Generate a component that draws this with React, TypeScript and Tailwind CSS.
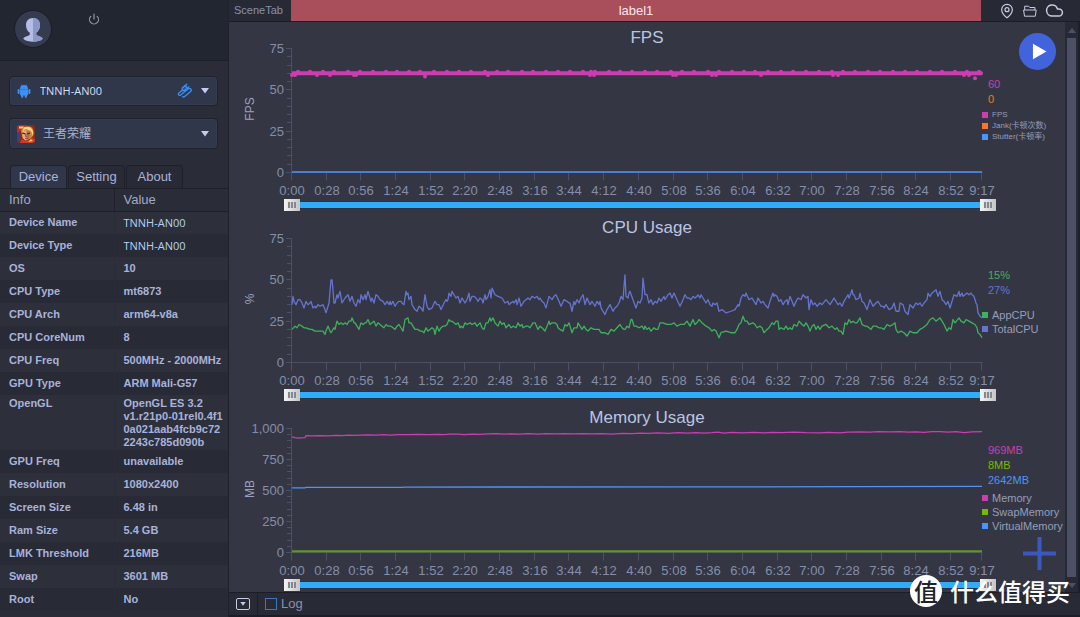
import { useEffect, useRef, useState } from "react";
import { Cloud, MapPin, Power } from "lucide-react";

type Point = [number, number];

interface Series {
	name: string;
	color: string;
	reading?: string;
	points?: Point[];
	strokeWidth?: number;
	dots?: Point[];
}

interface ChartProps {
	title: string;
	unit: string;
	max: number;
	step: number;
	minor: number;
	series: Series[];
	asideClass: string;
	legendClass: string;
}

const DURATION = 557;
const SAMPLE_SPAN = 690;

const DEVICE_INFO: [string, string][] = [
	["Device Name", "TNNH-AN00"],
	["Device Type", "TNNH-AN00"],
	["OS", "10"],
	["CPU Type", "mt6873"],
	["CPU Arch", "arm64-v8a"],
	["CPU CoreNum", "8"],
	["CPU Freq", "500MHz - 2000MHz"],
	["GPU Type", "ARM Mali-G57"],
	["OpenGL", "OpenGL ES 3.2\nv1.r21p0-01rel0.4f1\n0a021aab4fcb9c72\n2243c785d090b"],
	["GPU Freq", "unavailable"],
	["Resolution", "1080x2400"],
	["Screen Size", "6.48 in"],
	["Ram Size", "5.4 GB"],
	["LMK Threshold", "216MB"],
	["Swap", "3601 MB"],
	["Root", "No"],
];

function parse(data: string): Point[] {
	return data
		.trim()
		.split(/\s+/)
		.map((pair) => pair.split(",").map(Number) as Point);
}

const TOTAL_CPU = parse(`
0,35 1,40 2,37 4,35 6,38 8,38 10,36 12,33 14,37 16,35 18,36 19,37 21,33 23,34 24,33 26,35 28,34 31,35 33,32 34,30 37,36 38,43 39,50 40,50 41,44 42,36 43,36
45,41 46,39 48,43 50,36 53,39 56,41 58,37 60,40 62,36 64,34 66,38 68,36 69,41 71,38 73,41 74,38 76,43 79,37 80,39 82,36 84,41 86,40 88,38 91,37 93,35 95,37
97,35 98,37 99,35 101,37 103,34 105,36 107,37 109,37 110,36 112,35 114,43 115,41 116,42 117,38 119,40 120,35 123,32 125,31 127,34 129,33 131,31 132,36
133,41 135,34 137,32 140,33 143,37 145,35 147,35 149,32 152,36 154,38 155,37 156,38 157,42 159,40 160,43 162,41 164,39 166,40 168,36 170,39 171,38 173,36
175,38 177,42 178,37 180,40 182,40 184,39 186,37 188,39 190,38 191,36 193,41 194,38 196,40 198,44 199,39 200,45 203,41 206,40 210,39 212,37 213,36
216,37 217,35 219,36 221,37 222,36 224,38 225,35 227,39 229,34 232,37 234,38 236,39 238,38 240,40 243,39 245,40 247,38 248,39 250,37 252,36 254,33 257,40
260,38 262,40 264,41 267,37 269,34 272,38 275,37 277,36 278,36 280,31 282,37 283,35 285,38 287,36 289,39 291,41 293,35 295,39 298,35 300,37 301,36 303,34
305,37 307,35 308,37 309,33 310,32 313,29 315,32 318,35 321,31 323,33 325,34 327,36 329,40 331,38 332,46 333,53 334,40 336,39 337,42 338,43 341,38 344,33
346,37 348,36 350,39 351,51 352,46 353,41 355,41 356,38 357,36 359,38 361,35 363,37 365,36 367,39 369,37 370,38 372,40 373,38 376,41 378,42 380,39 382,42
385,38 388,34 391,38 393,41 395,39 397,39 399,38 401,40 403,39 405,40 406,41 408,39 409,41 411,39 414,36 416,38 418,35 420,34 421,36 423,35 425,36 427,31
430,32 434,30 439,31 443,32 446,35 447,34 449,39 451,41 453,40 454,42 457,38 460,39 462,37 464,35 466,39 467,38 469,36 471,37 473,35 476,33 478,37 481,42
482,40 483,41 485,40 487,37 489,38 491,35 493,37 495,38 496,35 498,40 500,37 502,34 504,37 506,39 509,38 511,41 514,39 516,40 517,32 519,38 521,35 523,36
525,34 528,36 530,35 534,38 538,35 540,37 542,39 544,37 546,35 548,36 550,34 552,37 554,39 556,41 557,39 559,42 560,44 561,41 562,41 564,38 567,39 568,42
570,37 572,36 575,32 578,38 581,34 584,36 586,37 589,34 591,34 592,33 594,35 595,34 597,32 600,33 602,36 604,31 607,31 608,36 611,35 613,31 616,29 618,35
621,33 624,36 626,35 628,36 630,34 632,36 635,38 636,42 638,40 640,42 642,43 644,44 646,40 648,43 650,38 652,37 654,35 656,37 658,33 661,39 662,41 665,40
667,43 668,40 670,42 671,40 673,41 675,42 677,41 679,42 680,41 682,40 684,36 685,35 686,30 688,28 690,27
`);

const APP_CPU = parse(`
0,20 3,22 5,21 7,23 10,22 12,21 14,21 18,20 20,20 23,19 27,19 31,19 33,17 34,19 36,22 38,19 39,18 42,21 43,20 45,25 47,23 49,24 51,23 53,24 55,23 57,25
59,25 60,27 62,24 63,24 65,22 67,20 69,24 71,23 73,24 74,24 76,26 78,23 80,24 82,25 84,22 86,24 88,23 90,22 92,21 94,23 96,22 99,22 101,21 103,20 105,22
107,23 109,21 111,19 113,26 116,27 117,24 119,24 121,22 123,20 126,20 128,19 130,19 132,18 134,21 136,19 138,20 140,21 142,20 143,17 145,22 147,19 149,21
151,22 153,22 155,23 157,26 158,25 160,25 162,24 164,23 166,24 168,21 169,22 171,21 173,24 175,23 178,24 180,23 183,24 185,22 188,24 190,21 192,20 194,24
196,24 198,27 199,25 201,27 203,24 206,22 208,25 210,23 212,24 214,21 217,23 219,21 221,22 224,21 226,24 228,22 230,23 231,21 234,22 236,22 238,21 241,24
243,24 246,20 248,22 250,21 253,19 255,22 257,25 258,23 260,24 263,24 265,23 266,21 268,20 271,19 273,23 275,22 277,24 279,20 280,18 282,21 285,21 286,24
288,22 290,20 292,22 294,20 296,19 299,21 302,20 305,20 307,20 309,18 313,18 316,17 319,20 322,19 325,21 328,23 330,21 332,20 333,20 335,22 337,21
339,26 340,26 342,22 344,22 347,21 350,22 352,20 353,22 355,20 357,21 359,19 362,21 364,20 366,20 368,24 371,24 375,23 379,23 382,24 385,22 388,23 392,23
395,25 398,22 401,26 403,23 405,24 407,26 410,24 412,23 414,22 417,21 420,19 422,20 424,19 427,15 429,18 434,19 439,18 443,18 445,20 447,23 449,24 451,28
453,25 455,25 457,23 461,24 463,23 465,21 468,22 470,21 472,18 475,20 477,21 480,24 482,23 484,25 486,25 487,20 489,21 492,20 494,22 496,20 498,21 500,20
502,23 505,22 507,25 510,23 512,22 514,24 516,22 518,19 520,22 522,23 524,20 526,22 528,20 530,22 534,23 537,21 540,22 543,20 545,21 547,19 549,19 551,17
553,24 555,23 557,26 559,24 561,25 563,24 565,24 568,27 570,23 573,22 575,22 577,21 579,20 581,22 584,22 587,21 589,21 592,20 595,23 598,22 601,23 603,24
604,20 606,18 609,19 612,18 615,16 618,19 621,18 625,18 628,20 631,21 635,23 638,26 641,27 644,25 648,27 650,25 652,23 655,19 657,21 659,20 661,26 663,24
667,27 669,25 672,24 674,26 677,25 680,24 683,23 685,21 686,18 688,17 690,15
`);

const MEMORY = parse(`
0,932 3,926 6,922 9,924 13,926 14,942 20,940 28,942 36,940 44,945 50,942 56,947 62,944 68,946 76,948 84,946 92,950 98,946 106,950 116,950 126,952 136,951 146,953
152,950 158,954 166,954 172,951 180,955 188,952 196,956 204,958 212,954 220,957 228,955 236,958 246,954 254,958 264,956 272,959 282,956 290,958 300,956
310,958 320,955 330,960 340,958 348,962 356,960 366,964 376,960 386,966 396,963 404,967 412,963 420,966 426,971 432,963 440,968 450,965 462,968 472,964
480,969 490,966 502,970 514,966 528,965 536,968 548,964 556,970 568,972 578,970 586,975 598,972 608,974 616,971 624,973 632,968 640,974 648,975 656,970
664,974 672,967 680,973 690,975
`);

const FPS_DOTS: Point[] = [
	...[
		6, 18, 31, 42, 56, 68, 81, 94, 105, 117, 128, 142, 155, 167, 179, 193, 205, 216, 230, 241, 254, 266, 278,
		291, 299, 303, 317, 328, 340, 353, 365, 379, 390, 402, 416, 427, 440, 452, 463, 476, 489, 501, 514, 527,
		540, 551, 563, 576, 588, 601, 613, 625, 638, 650, 663, 675, 687,
	].map((x): Point => [x, 61]),
	...[0, 3, 25, 38, 62, 64, 196, 298, 302, 381, 384, 420, 424, 469, 541, 546, 672, 677].map(
		(x): Point => [x, 59]
	),
	[133, 58],
	[683, 57],
	[689, 60],
];

const CHARTS: ChartProps[] = [
	{
		title: "FPS",
		unit: "FPS",
		max: 75,
		step: 25,
		minor: 5,
		asideClass: "pt-[35px]",
		legendClass: "mt-0.5 text-[8px] leading-[11px]",
		series: [
			{ name: "FPS", color: "#cb3eb0", reading: "60", points: [[0, 60], [690, 60]], strokeWidth: 4, dots: FPS_DOTS },
			{ name: "Jank(卡顿次数)", color: "#fb7429", reading: "0" },
			{ name: "Stutter(卡顿率)", color: "#4a95fb", points: [[0, 0.3], [690, 0.3]] },
		],
	},
	{
		title: "CPU Usage",
		unit: "%",
		max: 75,
		step: 25,
		minor: 5,
		asideClass: "pt-9",
		legendClass: "mt-2.5 text-[11px] leading-[14px]",
		series: [
			{ name: "AppCPU", color: "#3fb15c", reading: "15%", points: APP_CPU },
			{ name: "TotalCPU", color: "#6673d0", reading: "27%", points: TOTAL_CPU },
		],
	},
	{
		title: "Memory Usage",
		unit: "MB",
		max: 1000,
		step: 250,
		minor: 50,
		asideClass: "pt-[21px]",
		legendClass: "mt-[3px] text-[11px] leading-[14px]",
		series: [
			{ name: "Memory", color: "#cb3eb0", reading: "969MB", points: MEMORY },
			{ name: "SwapMemory", color: "#76b900", reading: "8MB", points: [[0, 10], [690, 10]], strokeWidth: 2 },
			{
				name: "VirtualMemory",
				color: "#4a95fb",
				reading: "2642MB",
				points: [[0, 521], [13, 521], [14, 526], [110, 526], [112, 528], [400, 529], [560, 531], [690, 533]],
			},
		],
	},
];

function useWidth(initial: number) {
	const ref = useRef<HTMLDivElement>(null);
	const [width, setWidth] = useState(initial);

	useEffect(() => {
		const el = ref.current;
		if (!el) return;
		const observer = new ResizeObserver(() => setWidth(el.clientWidth));
		observer.observe(el);
		return () => observer.disconnect();
	}, []);

	return { ref, width };
}

function formatTime(seconds: number) {
	return `${Math.floor(seconds / 60)}:${String(seconds % 60).padStart(2, "0")}`;
}

function Plot({ title, unit, max, step, minor, series }: ChartProps) {
	const { ref, width } = useWidth(753);
	const left = 63;
	const top = 6.5;
	const bottom = 130.5;
	const sx = (x: number) => left + (x / SAMPLE_SPAN) * (width - left);
	const sy = (v: number) => bottom - (v / max) * (bottom - top);

	const yTicks = Array.from({ length: max / minor + 1 }, (_, i) => i * minor);
	const xTicks = [...Array.from({ length: 20 }, (_, i) => i * 28), DURATION];

	return (
		<div ref={ref} className="min-w-0 flex-1">
			<svg
				width={width}
				height="157"
				role="img"
				aria-label={title}
				className="block overflow-visible text-[13px]"
			>
				<g stroke="#4b5066" fill="none">
					<path d={`M${left - 0.5} ${top}V${bottom}H${width + 0.5}`} />
					{yTicks.map((v) => {
						const y = Math.floor(sy(v)) + 0.5;
						return <path key={v} d={`M${left - (v % step ? 5 : 6)} ${y}H${left}`} />;
					})}
					{xTicks.map((t) => {
						const x = Math.round(sx((t / DURATION) * SAMPLE_SPAN)) - 0.5;
						return <path key={t} d={`M${x} ${bottom}v8`} />;
					})}
				</g>
				<g fill="#858dab">
					{yTicks
						.filter((v) => v % step === 0)
						.map((v) => (
							<text key={v} x={left - 8} y={Math.floor(sy(v)) + 5} textAnchor="end">
								{v.toLocaleString("en-US")}
							</text>
						))}
					{xTicks.map((t) => (
						<text
							key={t}
							x={Math.round(sx((t / DURATION) * SAMPLE_SPAN))}
							y="153"
							textAnchor="middle"
						>
							{formatTime(t)}
						</text>
					))}
				</g>
				<text
					transform="translate(25 67) rotate(-90)"
					textAnchor="middle"
					fill="#9aa1bf"
					className="text-[12px]"
				>
					{unit}
				</text>
				{[...series].reverse().map((s) => (
					<g key={s.name}>
						{s.points && (
							<polyline
								points={s.points.map(([x, v]) => `${sx(x)},${sy(v)}`).join(" ")}
								fill="none"
								stroke={s.color}
								strokeWidth={s.strokeWidth ?? 1.3}
								strokeLinejoin="round"
								opacity={s.strokeWidth === 2 ? 0.75 : 1}
							/>
						)}
						{s.dots?.map(([x, v]) => (
							<circle key={`${x}-${v}`} cx={sx(x)} cy={sy(v)} r="2" fill={s.color} />
						))}
					</g>
				))}
			</svg>
		</div>
	);
}

const THUMB =
	"pointer-events-none absolute inset-0 m-0 h-3 w-full appearance-none bg-transparent [&::-webkit-slider-runnable-track]:h-3 [&::-webkit-slider-thumb]:pointer-events-auto [&::-webkit-slider-thumb]:h-3 [&::-webkit-slider-thumb]:w-4 [&::-webkit-slider-thumb]:appearance-none [&::-webkit-slider-thumb]:px-1 [&::-webkit-slider-thumb]:py-[3px] [&::-webkit-slider-thumb]:[background:repeating-linear-gradient(90deg,#85878f_0_2px,#d8d8d8_2px_3px)_content-box,linear-gradient(90deg,#f4f4f4,#c4c4c4)_border-box]";

function RangeSlider({ title }: { title: string }) {
	const [range, setRange] = useState([0, DURATION]);

	return (
		<div className="relative mr-[69px] ml-[55px] h-3 px-4 py-[3px]">
			<div className="h-1.5 bg-[#30acfb] outline outline-[#2a3346]" />
			<input
				type="range"
				aria-label={`${title} range start`}
				max={DURATION}
				value={range[0]}
				onChange={(e) => setRange([Math.min(+e.target.value, range[1]), range[1]])}
				className={THUMB}
			/>
			<input
				type="range"
				aria-label={`${title} range end`}
				max={DURATION}
				value={range[1]}
				onChange={(e) => setRange([range[0], Math.max(+e.target.value, range[0])])}
				className={THUMB}
			/>
		</div>
	);
}

function Chart(props: ChartProps) {
	const { title, series, asideClass, legendClass } = props;

	return (
		<section>
			<h2 className="h-5 text-center text-[17px] leading-8 text-[#bcc4e4]">{title}</h2>
			<div className="flex h-[157px]">
				<Plot {...props} />
				<div className={`w-[83px] shrink-0 ${asideClass}`}>
					<div className="pl-1.5 text-[11px] leading-[15px]">
						{series
							.filter((s) => s.reading)
							.map((s) => (
								<div key={s.name} style={{ color: s.color }}>
									{s.reading}
								</div>
							))}
					</div>
					<ul className={`whitespace-nowrap text-[#969dba] ${legendClass}`}>
						{series.map((s) => (
							<li key={s.name} className="flex items-center gap-1">
								<span className="size-1.5 shrink-0" style={{ background: s.color }} />
								{s.name}
							</li>
						))}
					</ul>
				</div>
			</div>
			<RangeSlider title={title} />
			<div className="h-px" />
		</section>
	);
}

function AndroidIcon() {
	return (
		<svg viewBox="0 0 14 14" className="size-3.5" fill="#3d8ff5">
			<path d="M3 5a4 4 0 0 1 8 0z" />
			<path d="M4.2 0.6l1.2 1.7M9.8 0.6L8.6 2.3" stroke="#3d8ff5" strokeWidth="0.8" />
			<path d="M3 5.200h8v5.400a.8.8 0 0 1-.8.8H3.800a.8.8 0 0 1-.8-.8z" />
			<rect x="0.6" y="5" width="2" height="5" rx="1" />
			<rect x="11.4" y="5" width="2" height="5" rx="1" />
			<rect x="4.2" y="10.5" width="2" height="3.400" rx="0.8" />
			<rect x="7.8" y="10.5" width="2" height="3.400" rx="0.8" />
		</svg>
	);
}

function CableIcon() {
	return (
		<svg viewBox="0 0 16 16" className="size-4" fill="none" stroke="#3d8ff5" strokeWidth="1.3" strokeLinecap="round">
			<path d="M5.200 4.900l3-2.400 2.200 2.700-2.800 2.300-2.300.1z" fill="#3d8ff5" fillOpacity="0.35" />
			<path d="M8.400 2.600l1.300-1.400M10.400 4.900l1.500-1.100" />
			<path d="M5.200 7.200L2 9.900c-1.500 1.500 0 3.300 1.700 2L11 5.900c2-1.400 4.400.6 2.600 2.600L8.200 13c-1.100 1-1.900 1.300-2.600.8" />
		</svg>
	);
}

function GameIcon() {
	return (
		<svg viewBox="0 0 18 18" className="size-[18px]">
			<rect width="18" height="18" rx="3" fill="#8c2a1c" />
			<path d="M0 3a3 3 0 0 1 3-3h7L5 6 0 8z" fill="#c9291f" />
			<path d="M2 1.6h5l-1 1.8H2z" fill="#f3d37a" />
			<path d="M0 8l3-2v8l-2 3-1-2z" fill="#284a86" />
			<path d="M4 6c1-4 6-6 10-4 3 2 3 6 2 9l-3 3H6z" fill="#c98a3a" />
			<path d="M5 7l4-2 4 2 .6 4L11 15l-3 .5L5.5 12z" fill="#e3ac80" />
			<path d="M9.500 5L13 7l.6 4L11 15l-1.500.3z" fill="#b97248" />
			<path d="M5 8l3.4.8M10 9l3-1" stroke="#4b1c12" strokeWidth="1.2" />
			<path d="M9 9l-.5 2.4h1.4M8 13.3h3" stroke="#7f3320" strokeWidth="0.8" fill="none" />
			<path d="M7 2l-2 6 2-3 2-1 5 2 2 5c1-5-1-8-4-9z" fill="#f3d489" />
			<path d="M3 18l2-4 3 2 4-.5 3-3 3 2v.5a3 3 0 0 1-3 3z" fill="#d23a23" />
			<path d="M11 17l3-3 2 2z" fill="#f5c85c" />
		</svg>
	);
}

function Caret({ className = "" }: { className?: string }) {
	return (
		<svg viewBox="0 0 8 6" className={className} fill="#c5cbee">
			<path d="M0 0h8L4 5.5z" />
		</svg>
	);
}

const SELECT =
	"w-full appearance-none rounded border border-[#1e222e] bg-[#31374a] shadow-[inset_0_0_0_1px_#363c4f] outline-none";

function Sidebar() {
	const [tab, setTab] = useState("Device");

	return (
		<aside className="flex w-[229px] shrink-0 flex-col border-r border-[#1f222d] bg-[#2a2d38] text-[#a9b2da]">
			<div className="flex h-[61px] items-start border-b border-[#1c1f29] bg-[#222631] pt-[10px] pl-[14px]">
				<svg viewBox="0 0 38 38" className="size-[38px]" role="img" aria-label="User avatar">
					<circle cx="19" cy="19" r="18.5" fill="#363c50" stroke="#1b1e28" />
					<path
						d="M19 8c-4.500 0-7 3.200-7 7 0 3.500 1.400 6.200 3.800 7.800v1.700c-.6 1.800-4.600 1.300-6.600 4.300C11.500 31 15 31.800 19 31.800s7.500-.8 9.800-3c-2-3-6-2.500-6.600-4.300v-1.700C24.600 21.200 26 18.500 26 15c0-3.800-2.500-7-7-7z"
						fill="#b4bde6"
					/>
					<path
						d="M19 8c4.500 0 7 3.200 7 7 0 3.500-1.400 6.200-3.800 7.800v1.700c.6 1.800 4.600 1.300 6.600 4.300-2.300 2.200-5.800 3-9.800 3z"
						fill="#8d98c9"
					/>
				</svg>
				<button type="button" aria-label="Sign out" className="mt-[3px] ml-9">
					<Power className="size-3 text-[#9aa0b4]" strokeWidth={2.2} />
				</button>
			</div>

			<div className="flex flex-col gap-3 pt-[15px] pr-2.5 pl-[9px]">
				<div className="relative">
					<select
						aria-label="Device"
						className={`${SELECT} h-[30px] pl-[30px] font-['Open_Sans',sans-serif] text-[11px] font-medium text-[#cfdff6]`}
					>
						<option>TNNH-AN00</option>
					</select>
					<div className="pointer-events-none absolute inset-0 flex items-center px-2">
						<AndroidIcon />
						<div className="flex-1" />
						<CableIcon />
						<Caret className="mr-px ml-2 h-1.5 w-2" />
					</div>
				</div>
				<div className="relative">
					<select
						aria-label="App"
						className={`${SELECT} h-[31px] pl-[33px] text-[12px] text-[#a9b0cc]`}
					>
						<option>王者荣耀</option>
					</select>
					<div className="pointer-events-none absolute inset-0 flex items-center justify-between px-2">
						<GameIcon />
						<Caret className="mr-px h-1.5 w-2" />
					</div>
				</div>
			</div>

			<div role="tablist" className="mt-4 flex gap-px border-b border-[#1e212c] pl-[10px] text-[13px]">
				{["Device", "Setting", "About"].map((name) => (
					<button
						key={name}
						type="button"
						role="tab"
						aria-selected={tab === name}
						onClick={() => setTab(name)}
						className={`h-[23px] w-[57px] rounded-t-sm border border-b-0 border-[#1e212c] ${
							tab === name ? "bg-[#31374a]" : "bg-[#282b36]"
						}`}
					>
						{name}
					</button>
				))}
			</div>

			<table className="w-full table-fixed border-collapse text-left">
				<thead className="text-[13px] text-[#a3a9c4]">
					<tr className="h-[22px] border-b border-[#1e212c]">
						<th className="w-[114px] border-r border-[#1e212c] p-0 pl-[9px] font-normal">Info</th>
						<th className="p-0 pl-[9px] font-normal">Value</th>
					</tr>
				</thead>
				<tbody className="text-[11px] leading-[13px] font-bold">
					{DEVICE_INFO.map(([label, value]) => {
						const multiline = value.includes("\n");
						return (
							<tr
								key={label}
								className={`odd:bg-[#2d303b] even:bg-[#282b36] ${multiline ? "h-[55px] align-top" : "h-[23px]"}`}
							>
								<th scope="row" className={`p-0 pl-[9px] ${multiline ? "pt-0.5" : ""}`}>
									{label}
								</th>
								<td
									className={`border-l border-[#2a2d38] p-0 pl-[9px] whitespace-pre ${multiline ? "pt-0.5" : ""} ${
										value === "TNNH-AN00"
											? "font-['Open_Sans',sans-serif] font-medium text-[#b3d3f3]"
											: ""
									}`}
								>
									{value}
								</td>
							</tr>
						);
					})}
				</tbody>
			</table>
		</aside>
	);
}

function TopBar() {
	return (
		<header className="flex h-[22px] border-b border-[#1b1e28] bg-[#272a35]">
			<div className="w-[62px] shrink-0 pl-[5px] text-[11px] leading-5 text-[#8990ad]">SceneTab</div>
			<div className="min-w-0 flex-1 bg-[#a94f5c] text-center text-[13px] leading-[21px] text-[#f6e8ec]">
				label1
			</div>
			<div className="flex w-[99px] shrink-0 items-center gap-2 pl-[18px] text-[#c6cce4]">
				<button type="button" aria-label="Location">
					<MapPin className="size-4" strokeWidth={1.8} />
				</button>
				<button type="button" aria-label="Open folder">
					<svg viewBox="0 0 14 12" className="h-3 w-3.5" fill="none" stroke="currentColor" strokeLinejoin="round">
						<path d="M1.700 5V1.200h3.800l1.200 1.300h5.200V5M.6 5h12.600l-.9 6.200H1.500z" />
					</svg>
				</button>
				<button type="button" aria-label="Cloud">
					<Cloud className="size-[19px]" strokeWidth={1.9} />
				</button>
			</div>
		</header>
	);
}

function ScrollBar() {
	return (
		<div className="flex w-[15px] shrink-0 flex-col items-center border-r-2 border-[#1d202b] bg-[#272a35] py-1">
			<svg viewBox="0 0 8 5" className="mt-0.5 h-[5px] w-2" fill="#4a5066">
				<path d="M0 5h8L4 0z" />
			</svg>
			<div className="mt-[5px] w-[9px] flex-1 bg-[#4b5065]" />
			<svg viewBox="0 0 8 5" className="mt-1.5 h-[5px] w-2" fill="#4a5066">
				<path d="M0 0h8L4 5z" />
			</svg>
		</div>
	);
}

export default function App() {
	return (
		<div className="relative flex min-h-screen overflow-hidden bg-[#343743] font-['Liberation_Sans','Noto_Sans_CJK_SC',sans-serif]">
			<Sidebar />

			<div className="flex min-w-0 flex-1 flex-col">
				<TopBar />

				<div className="flex">
					<main className="relative min-w-0 flex-1">
						{CHARTS.map((chart) => (
							<Chart key={chart.title} {...chart} />
						))}

						{/* Floating actions */}
						<button
							type="button"
							aria-label="Start"
							className="absolute top-[11px] right-[9px] flex size-[37px] items-center justify-center rounded-full bg-[#4164dc]"
						>
							<svg viewBox="0 0 16 18" className="ml-1 h-[17px] w-[15px]" fill="#fff">
								<path d="M1 .8L15.500 9 1 17.200z" />
							</svg>
						</button>
						<button type="button" aria-label="Add chart" className="absolute right-[9px] bottom-[22px]">
							<svg viewBox="0 0 33 33" className="size-[33px]" stroke="#3b58bd" strokeWidth="4">
								<path d="M0 16.500h33M16.500 0v33" />
							</svg>
						</button>
					</main>
					<ScrollBar />
				</div>

				<footer className="flex flex-1 items-stretch border-t border-b-2 border-[#1b1e28] bg-[#282b36]">
					<div className="flex w-[29px] items-center justify-center border-r border-[#1b1e28]">
						<button
							type="button"
							aria-label="Expand panel"
							className="flex h-3 w-3.5 items-center justify-center rounded-[2px] border border-[#c5cbe0]"
						>
							<Caret className="h-1 w-1.5" />
						</button>
					</div>
					<label className="flex items-center gap-1 pl-[7px] text-[13px] text-[#8990ad]">
						<input type="checkbox" className="size-3 appearance-none border border-[#3c76c4] checked:bg-[#3c76c4]" />
						Log
					</label>
				</footer>
			</div>

			{/* Watermark */}
			<div className="pointer-events-none absolute right-2.5 bottom-[10px] flex items-center gap-2 font-['Noto_Sans_CJK_SC',sans-serif] font-medium text-white">
				<span className="flex size-8 items-center justify-center rounded-full bg-white text-[24px] leading-8 text-[#20232d]">
					值
				</span>
				<span className="text-[24px] leading-8">什么值得买</span>
			</div>
		</div>
	);
}
